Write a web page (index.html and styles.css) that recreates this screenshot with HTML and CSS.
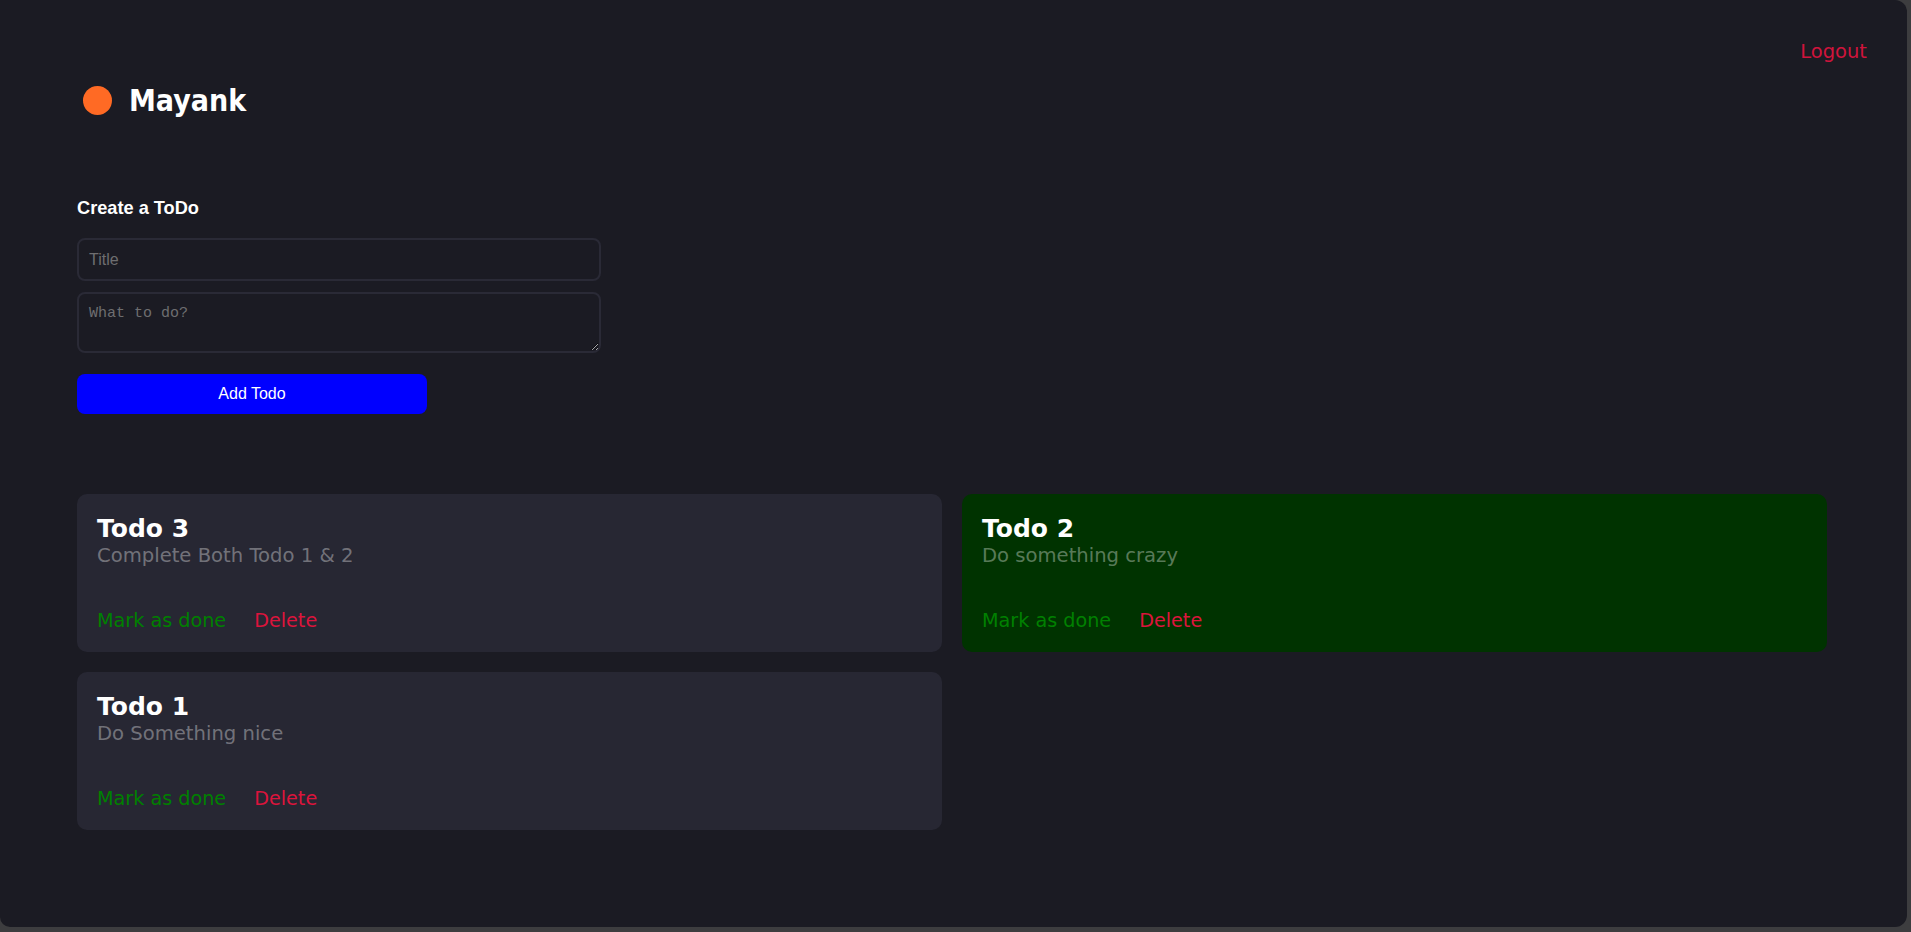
FILE: index.html
```html
<!DOCTYPE html>
<html lang="en">
<head>
<meta charset="utf-8">
<title>Todos</title>
<link rel="stylesheet" href="styles.css">
</head>
<body>
<div class="window">
  <header class="topbar">
    <button class="logout">Logout</button>
  </header>
  <div class="brand">
    <span class="dot"></span>
    <span class="name">Mayank</span>
  </div>
  <main class="content">
    <form class="create">
      <h2 class="create-title">Create a ToDo</h2>
      <input class="field" type="text" placeholder="Title">
      <textarea class="field area" placeholder="What to do?"></textarea>
      <button type="button" class="add">Add Todo</button>
    </form>
    <section class="grid">
      <article class="card">
        <h3 class="card-title">Todo 3</h3>
        <p class="card-desc">Complete Both Todo 1 &amp; 2</p>
        <div class="actions">
          <button class="act done">Mark as done</button>
          <button class="act del">Delete</button>
        </div>
      </article>
      <article class="card card-done">
        <h3 class="card-title">Todo 2</h3>
        <p class="card-desc">Do something crazy</p>
        <div class="actions">
          <button class="act done">Mark as done</button>
          <button class="act del">Delete</button>
        </div>
      </article>
      <article class="card">
        <h3 class="card-title">Todo 1</h3>
        <p class="card-desc">Do Something nice</p>
        <div class="actions">
          <button class="act done">Mark as done</button>
          <button class="act del">Delete</button>
        </div>
      </article>
    </section>
  </main>
</div>
</body>
</html>
```

FILE: styles.css
```css
* { box-sizing: border-box; }

html, body {
  margin: 0;
  padding: 0;
  background: #3d3d3f;
  height: 932px;
  overflow: hidden;
}

.window {
  width: 1907px;
  height: 927px;
  background: #1b1b23;
  border-radius: 0 12px 12px 10px;
  display: flex;
  flex-direction: column;
  font-family: "DejaVu Sans", sans-serif;
  color: #ffffff;
}

.topbar {
  display: flex;
  justify-content: flex-end;
  padding: 40px 40px 0 0;
}

.logout {
  background: none;
  border: none;
  padding: 0;
  font-family: "DejaVu Sans", sans-serif;
  font-size: 19.5px;
  line-height: 23px;
  color: #d0143c;
  cursor: pointer;
}

.brand {
  display: flex;
  align-items: center;
  gap: 17px;
  margin-top: 20px;
  padding-left: 83px;
}

.dot {
  width: 29px;
  height: 29px;
  border-radius: 50%;
  background: #ff6a24;
}

.name {
  font-family: "DejaVu Sans Condensed", "DejaVu Sans", sans-serif;
  font-weight: bold;
  font-size: 30px;
  line-height: 35px;
}

.content {
  padding: 0 80px 0 77px;
}

.create {
  display: flex;
  flex-direction: column;
  align-items: flex-start;
  margin-top: 79px;
}

.create-title {
  margin: 0 0 19px;
  font-family: "Liberation Sans", Arial, sans-serif;
  font-weight: bold;
  font-size: 18.2px;
  line-height: 22px;
}

.field {
  display: block;
  width: 524px;
  height: 43px;
  margin: 0;
  background: transparent;
  border: 2px solid #2a2a36;
  border-radius: 8px;
  padding: 0 10px;
  font-family: "Liberation Sans", Arial, sans-serif;
  font-size: 16px;
  color: #ffffff;
  outline: none;
}

.field::placeholder { color: #6e6e70; }

.area {
  margin-top: 11px;
  height: 61px;
  padding: 11px 10px;
  font-family: "Liberation Mono", monospace;
  font-size: 15px;
  resize: vertical;
}

.add {
  margin-top: 21px;
  width: 350px;
  height: 40px;
  border: none;
  border-radius: 8px;
  background: #0000ff;
  color: #ffffff;
  font-family: "Liberation Sans", Arial, sans-serif;
  font-size: 16px;
  cursor: pointer;
}

.grid {
  display: grid;
  grid-template-columns: 1fr 1fr;
  gap: 20px;
  margin-top: 80px;
}

.card {
  background: #272733;
  border-radius: 10px;
  padding: 21px 20px 20px;
  height: 158px;
  display: flex;
  flex-direction: column;
}

.card-done { background: #003300; }

.card-title {
  margin: 0 0 2px;
  font-size: 25px;
  line-height: 28px;
  font-weight: bold;
  color: #ffffff;
}

.card-desc {
  margin: 0;
  font-size: 19.6px;
  line-height: 22px;
  color: rgba(255, 255, 255, 0.36);
}

.actions {
  display: flex;
  gap: 28px;
  margin-top: 43px;
}

.act {
  background: none;
  border: none;
  padding: 0;
  font-family: "DejaVu Sans", sans-serif;
  font-size: 19.2px;
  line-height: 22px;
  cursor: pointer;
}

.done { color: #008000; }
.del { color: #dc143c; }
```
